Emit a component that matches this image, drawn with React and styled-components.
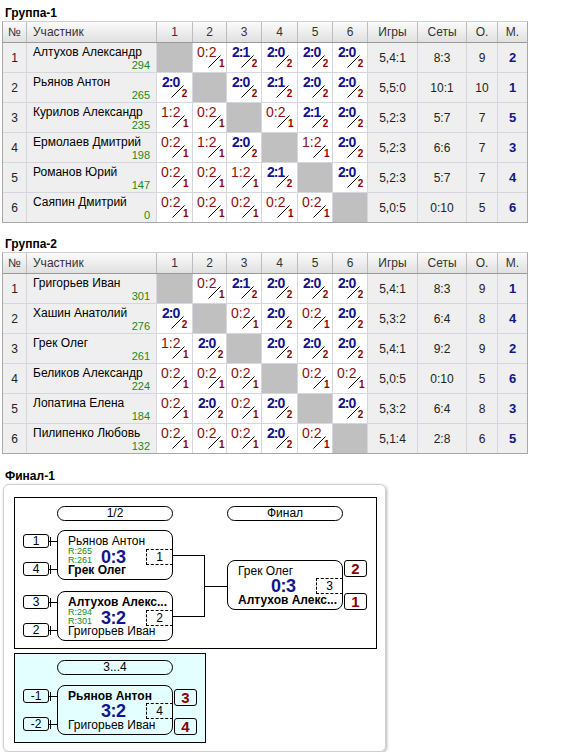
import styled, { createGlobalStyle } from "styled-components";

const GlobalStyle = createGlobalStyle`
    body {
        margin: 0;
        background: #fff;
        font-family: "Liberation Sans", Arial, sans-serif;
        color: #000;
    }
`;

const COLS = "24px 130px 36px 34px 35px 36px 35px 35px 50px 49px 31px 29px";
const HEAD = ["№", "Участник", "1", "2", "3", "4", "5", "6", "Игры", "Сеты", "О.", "М."];

const group1 = [
    ["Алтухов Александр", 294, ["", "0:2", "2:1", "2:0", "2:0", "2:0"], "5,4:1", "8:3", 9, 2],
    ["Рьянов Антон", 265, ["2:0", "", "2:0", "2:1", "2:0", "2:0"], "5,5:0", "10:1", 10, 1],
    ["Курилов Александр", 235, ["1:2", "0:2", "", "0:2", "2:1", "2:0"], "5,2:3", "5:7", 7, 5],
    ["Ермолаев Дмитрий", 198, ["0:2", "1:2", "2:0", "", "1:2", "2:0"], "5,2:3", "6:6", 7, 3],
    ["Романов Юрий", 147, ["0:2", "0:2", "1:2", "2:1", "", "2:0"], "5,2:3", "5:7", 7, 4],
    ["Саяпин Дмитрий", 0, ["0:2", "0:2", "0:2", "0:2", "0:2", ""], "5,0:5", "0:10", 5, 6],
];

const group2 = [
    ["Григорьев Иван", 301, ["", "0:2", "2:1", "2:0", "2:0", "2:0"], "5,4:1", "8:3", 9, 1],
    ["Хашин Анатолий", 276, ["2:0", "", "0:2", "2:0", "0:2", "2:0"], "5,3:2", "6:4", 8, 4],
    ["Грек Олег", 261, ["1:2", "2:0", "", "2:0", "2:0", "2:0"], "5,4:1", "9:2", 9, 2],
    ["Беликов Александр", 224, ["0:2", "0:2", "0:2", "", "0:2", "0:2"], "5,0:5", "0:10", 5, 6],
    ["Лопатина Елена", 184, ["0:2", "2:0", "0:2", "2:0", "", "2:0"], "5,3:2", "6:4", 8, 3],
    ["Пилипенко Любовь", 132, ["0:2", "0:2", "0:2", "2:0", "0:2", ""], "5,1:4", "2:8", 6, 5],
];

const Page = styled.div`
    width: 570px;
`;

const Title = styled.div`
    margin-top: ${p => p.$gap || 0}px;
    padding: 6px 5px 1px;
    font-size: 12px;
    line-height: 14px;
    font-weight: bold;
`;

const Table = styled.div`
    margin-left: 2px;
    width: 526px;
    box-sizing: border-box;
    border: 1px solid #a8a8a8;
    border-top-color: #cfcfcf;
`;

const HeadRow = styled.div`
    display: grid;
    grid-template-columns: ${COLS};
    height: 21px;
    box-sizing: border-box;
    background: linear-gradient(#fbfbfb, #e0e0e0);
    border-bottom: 1px solid #9a9a9a;
`;

const HeadCell = styled.div`
    display: flex;
    align-items: center;
    justify-content: ${p => (p.$left ? "flex-start" : "center")};
    padding-left: ${p => (p.$left ? 6 : 0)}px;
    border-right: 1px solid #bdbdbd;
    font-size: 12px;
    color: #333;
    &:last-child {
        border-right: none;
    }
`;

const Row = styled.div`
    display: grid;
    grid-template-columns: ${COLS};
    height: 30px;
    box-sizing: border-box;
    border-bottom: 1px solid #d6d6de;
    &:last-child {
        border-bottom: none;
        height: 29px;
    }
`;

const InfoCell = styled.div`
    display: flex;
    align-items: center;
    justify-content: center;
    background: #efefef;
    border-right: 1px solid #d6d6de;
    font-size: 12px;
    color: #222;
    &:last-child {
        border-right: none;
    }
`;

const Rank = styled(InfoCell)`
    font-size: 13px;
    font-weight: bold;
    color: #14148c;
`;

const NameCell = styled.div`
    display: flex;
    flex-direction: column;
    justify-content: space-between;
    padding: 2px 6px 1px 6px;
    background: #efefef;
    border-right: 1px solid #d6d6de;
`;

const PlayerName = styled.div`
    font-size: 12px;
    line-height: 14px;
    white-space: nowrap;
`;

const Rating = styled.div`
    align-self: flex-end;
    font-size: 11px;
    line-height: 12px;
    color: #1a8a1a;
`;

const EmptyCell = styled.div`
    background: #c0c0c0;
    border-right: 1px solid #d6d6de;
`;

const ScoreCell = styled.div`
    display: flex;
    align-items: flex-start;
    padding: 1px 0 0 ${p => (p.$win ? 5 : 4)}px;
    background: #fff;
    border-right: 1px solid #d6d6de;
`;

const Score = styled.span`
    font-size: 14px;
    line-height: 16px;
    font-weight: ${p => (p.$win ? "bold" : "normal")};
    letter-spacing: ${p => (p.$win ? "-1px" : "0")};
    color: ${p => (p.$win ? "#12128a" : "#8b1010")};
`;

const Frac = styled.span`
    display: grid;
    width: 16px;
    height: 13px;
    margin: 11px 0 0 -8px;
    & > * {
        grid-area: 1 / 1;
    }
`;

const Sub = styled.span`
    justify-self: end;
    align-self: end;
    font-size: 10px;
    line-height: 8px;
    font-weight: bold;
    color: #8b0000;
`;

const ScoreBox = ({ value }) => {
    const win = value[0] === "2";
    return (
        <ScoreCell $win={win}>
            <Score $win={win}>{value}</Score>
            <Frac>
                <svg width="13" height="13">
                    <line x1="0.5" y1="12.5" x2="12.5" y2="0.5" stroke="#000" strokeWidth="1" />
                </svg>
                <Sub>{win ? 2 : 1}</Sub>
            </Frac>
        </ScoreCell>
    );
};

const GroupTable = ({ rows }) => (
    <Table>
        <HeadRow>
            {HEAD.map((h, i) => (
                <HeadCell key={h} $left={i === 1}>{h}</HeadCell>
            ))}
        </HeadRow>
        {rows.map(([name, rating, games, g, s, pts, place], i) => (
            <Row key={name}>
                <InfoCell>{i + 1}</InfoCell>
                <NameCell>
                    <PlayerName>{name}</PlayerName>
                    <Rating>{rating}</Rating>
                </NameCell>
                {games.map((v, j) => (v ? <ScoreBox key={j} value={v} /> : <EmptyCell key={j} />))}
                <InfoCell>{g}</InfoCell>
                <InfoCell>{s}</InfoCell>
                <InfoCell>{pts}</InfoCell>
                <Rank>{place}</Rank>
            </Row>
        ))}
    </Table>
);

/* ---------- bracket ---------- */

const Panel = styled.div`
    margin-left: 3px;
    width: 383px;
    box-sizing: border-box;
    padding: 12px 8px 8px 10px;
    border: 1px solid #cfcfcf;
    border-radius: 6px;
    box-shadow: 1px 1px 3px rgba(0, 0, 0, 0.3);
`;

const Stage = styled.div`
    display: flex;
    align-items: flex-start;
    width: 363px;
    box-sizing: border-box;
    padding: 8px 0 7px 8px;
    border: 1px solid #000;
    background: #fff;
`;

const Extra = styled.div`
    margin-top: 4px;
    width: 192px;
    box-sizing: border-box;
    padding: 6px 0 7px 8px;
    border: 1px solid #000;
    background: #e4ffff;
`;

const Round = styled.div`
    display: flex;
    flex-direction: column;
`;

const Pill = styled.div`
    width: 116px;
    height: 15px;
    box-sizing: border-box;
    margin-left: ${p => p.$indent || 0}px;
    border: 1px solid #000;
    border-radius: 8px;
    font-size: 12px;
    line-height: 13px;
    text-align: center;
`;

const Pair = styled.div`
    display: flex;
    margin-top: ${p => p.$gap}px;
`;

const Seeds = styled.div`
    display: flex;
    flex-direction: column;
    justify-content: space-between;
    padding: 4px 0;
`;

const Seed = styled.div`
    display: flex;
    align-items: center;
`;

const SeedBox = styled.div`
    width: 26px;
    height: 14px;
    box-sizing: border-box;
    border: 1px solid #000;
    border-radius: 3px;
    font-size: 12px;
    line-height: 12px;
    text-align: center;
`;

const MatchBox = styled.div`
    display: flex;
    flex-direction: column;
    width: 116px;
    height: 50px;
    box-sizing: border-box;
    padding: 4px 0 2px 10px;
    border: 1px solid #000;
    border-radius: 8px;
`;

const Name = styled.div`
    height: 13px;
    font-size: 12px;
    line-height: 13px;
    font-weight: ${p => (p.$win ? "bold" : "normal")};
    white-space: nowrap;
    overflow: hidden;
`;

const Mid = styled.div`
    display: grid;
    grid-template-columns: 33px auto 1fr 26px;
    align-items: center;
    height: 16px;
`;

const Ratings = styled.div`
    align-self: start;
    margin-top: -1px;
    font-size: 9px;
    line-height: 9px;
    color: #1a8a1a;
`;

const BigScore = styled.div`
    grid-column: 2;
    font-size: 18px;
    line-height: 16px;
    font-weight: bold;
    letter-spacing: -0.5px;
    color: #14148c;
`;

const Tag = styled.div`
    grid-column: 4;
    height: 16px;
    box-sizing: border-box;
    margin-right: -1px;
    border: 1px dashed #000;
    font-size: 12px;
    line-height: 14px;
    text-align: center;
`;

const Results = styled.div`
    display: flex;
    flex-direction: column;
    justify-content: space-between;
    margin-left: 1px;
    padding-top: ${p => p.$pad || 0}px;
`;

const Place = styled.div`
    width: 23px;
    height: 17px;
    box-sizing: border-box;
    border: 1px solid #000;
    border-radius: 3px;
    font-size: 15px;
    line-height: 15px;
    font-weight: bold;
    text-align: center;
    color: #8b0000;
`;

const Link = () => (
    <svg width="8" height="14">
        <line x1="0" y1="7.5" x2="8" y2="7.5" stroke="#000" strokeWidth="1" />
        <line x1="1.5" y1="3" x2="1.5" y2="12" stroke="#000" strokeWidth="1" />
    </svg>
);

const Match = ({ top, bottom, score, tag, ratings, winTop }) => (
    <MatchBox>
        <Name $win={winTop}>{top}</Name>
        <Mid>
            {ratings ? (
                <Ratings>
                    <div>R:{ratings[0]}</div>
                    <div>R:{ratings[1]}</div>
                </Ratings>
            ) : null}
            <BigScore>{score}</BigScore>
            <Tag>{tag}</Tag>
        </Mid>
        <Name $win={!winTop}>{bottom}</Name>
    </MatchBox>
);

const SeededMatch = ({ seeds, gap, ...match }) => (
    <Pair $gap={gap}>
        <Seeds>
            {seeds.map(s => (
                <Seed key={s}>
                    <SeedBox>{s}</SeedBox>
                    <Link />
                </Seed>
            ))}
        </Seeds>
        <Match {...match} />
        {match.places && (
            <Results $pad={4}>
                <Place>{match.places[0]}</Place>
                <Place>{match.places[1]}</Place>
            </Results>
        )}
    </Pair>
);

const Bracket = () => (
    <Panel>
        <Stage>
            <Round>
                <Pill $indent={34}>1/2</Pill>
                <SeededMatch gap={9} seeds={["1", "4"]} top="Рьянов Антон" bottom="Грек Олег"
                    score="0:3" tag="1" ratings={[265, 261]} winTop={false} />
                <SeededMatch gap={11} seeds={["3", "2"]} top="Алтухов Алекс..." bottom="Григорьев Иван"
                    score="3:2" tag="2" ratings={[294, 301]} winTop={true} />
            </Round>
            <svg width="54" height="135" shapeRendering="crispEdges">
                <g stroke="#000" strokeWidth="1">
                    <line x1="0" y1="49.5" x2="32" y2="49.5" />
                    <line x1="0" y1="110.5" x2="32" y2="110.5" />
                    <line x1="31.5" y1="49.5" x2="31.5" y2="110.5" />
                    <line x1="31.5" y1="80.5" x2="54" y2="80.5" />
                </g>
            </svg>
            <Round>
                <Pill>Финал</Pill>
                <Pair $gap={39}>
                    <Match top="Грек Олег" bottom="Алтухов Алекс..." score="0:3" tag="3" winTop={false} />
                    <Results>
                        <Place>2</Place>
                        <Place>1</Place>
                    </Results>
                </Pair>
            </Round>
        </Stage>
        <Extra>
            <Pill $indent={34}>3...4</Pill>
            <SeededMatch gap={10} seeds={["-1", "-2"]} top="Рьянов Антон" bottom="Григорьев Иван"
                score="3:2" tag="4" winTop={true} places={["3", "4"]} />
        </Extra>
    </Panel>
);

export default function App() {
    return (
        <Page>
            <GlobalStyle />
            <Title>Группа-1</Title>
            <GroupTable rows={group1} />
            <Title $gap={8}>Группа-2</Title>
            <GroupTable rows={group2} />
            <Title $gap={9}>Финал-1</Title>
            <Bracket />
        </Page>
    );
}
